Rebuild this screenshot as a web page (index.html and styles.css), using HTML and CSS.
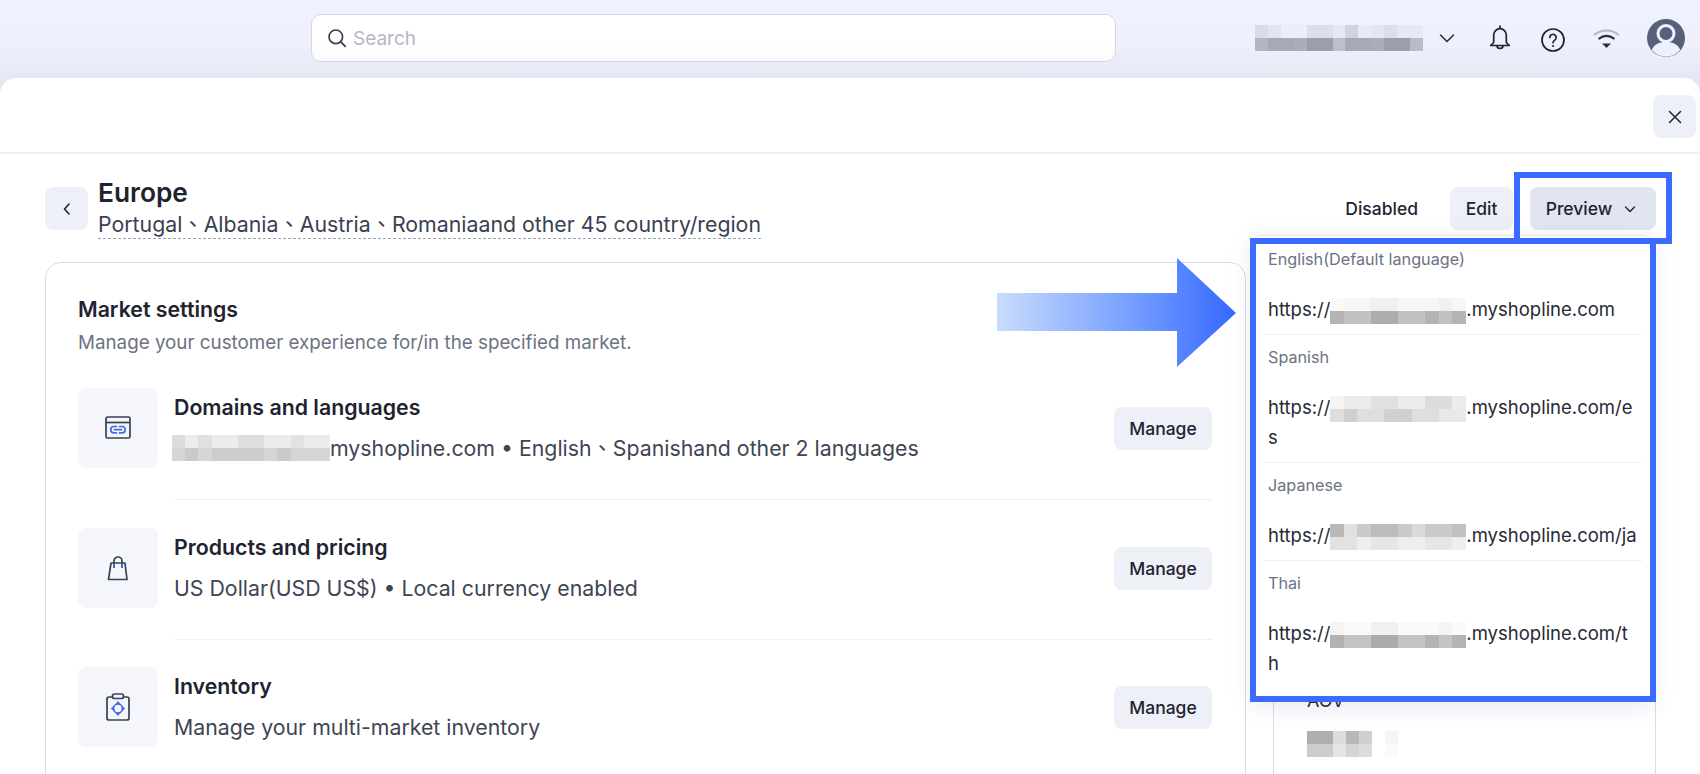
FILE: index.html
```html
<!DOCTYPE html>
<html lang="en">
<head>
<meta charset="utf-8">
<title>Europe market</title>
<link rel="stylesheet" href="styles.css">
</head>
<body>
<div class="app">
  <header class="topbar">
    <div class="search">
      <svg class="search-icon" viewBox="0 0 20 20" width="20" height="20"><circle cx="8.800" cy="8.800" r="6.800" fill="none" stroke="#3b3f4e" stroke-width="1.700"/><path d="M13.800 13.800l4.400 4.600" stroke="#3b3f4e" stroke-width="1.800" stroke-linecap="round"/></svg>
      <span class="search-text">Search</span>
    </div>
    <div class="tools">
      <div class="account">
        <svg class="pix" width="168" height="26" viewBox="0 0 13 2" preserveAspectRatio="none" shape-rendering="crispEdges">
          <rect x="0" y="0" width="1" height="1" fill="#d8dbe8"/><rect x="1" y="0" width="1" height="1" fill="#e2e5f1"/><rect x="2" y="0" width="2" height="1" fill="#ebeef8"/><rect x="4" y="0" width="2" height="1" fill="#dcdfea"/><rect x="6" y="0" width="1" height="1" fill="#e6e9f4"/><rect x="7" y="0" width="1" height="1" fill="#d0d2df"/><rect x="8" y="0" width="1" height="1" fill="#e8ebf6"/><rect x="9" y="0" width="1" height="1" fill="#e4e7f2"/><rect x="10" y="0" width="1" height="1" fill="#dcdfea"/><rect x="11" y="0" width="2" height="1" fill="#e6e9f4"/>
          <rect x="0" y="1" width="1" height="1" fill="#b3b5c4"/><rect x="1" y="1" width="2" height="1" fill="#a6a9b9"/><rect x="3" y="1" width="1" height="1" fill="#aaadbc"/><rect x="4" y="1" width="2" height="1" fill="#9c9eae"/><rect x="6" y="1" width="1" height="1" fill="#bcbfcd"/><rect x="7" y="1" width="2" height="1" fill="#a6a9b9"/><rect x="9" y="1" width="1" height="1" fill="#aaadbc"/><rect x="10" y="1" width="2" height="1" fill="#9c9eae"/><rect x="12" y="1" width="1" height="1" fill="#b8bbc9"/>
        </svg>
        <svg class="icon" viewBox="0 0 24 24" width="24" height="24"><path d="M5.500 9l6.500 6.500L18.500 9" fill="none" stroke="#2b2f3b" stroke-width="1.600" stroke-linecap="round" stroke-linejoin="round"/></svg>
      </div>
      <svg class="icon" viewBox="0 0 24 26" width="24" height="26"><path d="M12 1v2.500M5.700 17.500V10a6.300 6.300 0 0 1 12.600 0v7.500l3 3H2.700z" fill="none" stroke="#1f2330" stroke-width="1.700" stroke-linejoin="round" stroke-linecap="round"/><path d="M9 20.500a3 3 0 0 0 6 0" fill="none" stroke="#1f2330" stroke-width="1.700"/></svg>
      <svg class="icon help" viewBox="0 0 24 24" width="24" height="24"><circle cx="12" cy="12" r="11" fill="none" stroke="#1f2330" stroke-width="1.700"/><path d="M8.800 9.500a3.200 3.200 0 1 1 4.900 2.700c-1.100.7-1.700 1.300-1.700 2.500" fill="none" stroke="#1f2330" stroke-width="1.700" stroke-linecap="round"/><circle cx="12" cy="18" r="1.100" fill="#1f2330"/></svg>
      <svg class="icon wifi" viewBox="0 0 27 20" width="27" height="20"><path d="M1 7c7.500-6 17.500-6 25 0" fill="none" stroke="#b4b7c3" stroke-width="2.200"/><path d="M5.500 11c5-4 11-4 16 0" fill="none" stroke="#2b2f3b" stroke-width="2.200"/><path d="M9 15.500h9l-4.500 4.500z" fill="#2b2f3b"/></svg>
      <svg class="avatar" viewBox="0 0 38 38" width="38" height="38"><circle cx="19" cy="19" r="19" fill="#566079"/><circle cx="19" cy="14.500" r="8" fill="#566079" stroke="#eef1fd" stroke-width="3"/><path d="M4.800 31c2-5.500 7.200-8 14.200-8s12.200 2.500 14.200 8A18.500 18.500 0 0 1 4.800 31z" fill="#eef1fd"/></svg>
    </div>
  </header>

  <div class="panel">
    <div class="panel-bar">
      <button class="btn btn-square" type="button"><svg viewBox="0 0 14 14" width="14" height="14"><path d="M1.500 1.500l11 11M12.500 1.500l-11 11" stroke="#1f2330" stroke-width="1.500" stroke-linecap="round"/></svg></button>
    </div>
    <main class="content">
      <div class="page-head">
        <button class="btn btn-back" type="button"><svg viewBox="0 0 14 14" width="14" height="14"><path d="M9 2L4.500 7 9 12" fill="none" stroke="#1f2330" stroke-width="1.600" stroke-linecap="round" stroke-linejoin="round"/></svg></button>
        <div class="head-text">
          <h1 class="page-title">Europe</h1>
          <div class="page-sub">Portugal、Albania、Austria、Romaniaand other 45 country/region</div>
        </div>
        <div class="actions">
          <span class="status">Disabled</span>
          <button class="btn btn-text" type="button">Edit</button>
          <div class="preview-wrap">
            <button class="btn btn-preview" type="button">Preview<svg viewBox="0 0 12 12" width="12" height="12"><path d="M1.500 4L6 8.500 10.500 4" fill="none" stroke="#1f2330" stroke-width="1.400" stroke-linecap="round" stroke-linejoin="round"/></svg></button>
            <div class="dropdown">
              <div class="lang lang-first">
                <div class="lang-label">English(Default language)</div>
                <div class="lang-url">https://<svg class="pix" width="136" height="26" viewBox="0 0 10 2" preserveAspectRatio="none" shape-rendering="crispEdges"><rect width="10" height="1" fill="#f6f6f6"/><rect x="0" width="1" height="1" fill="#fafafa"/><rect x="3" width="2" height="1" fill="#f0f0f0"/><rect x="8" width="1" height="1" fill="#f0f0f0"/><rect y="1" width="10" height="1" fill="#c2c2c2"/><rect x="0" y="1" width="1" height="1" fill="#b4b4b4"/><rect x="3" y="1" width="2" height="1" fill="#adadad"/><rect x="7" y="1" width="1" height="1" fill="#b4b4b4"/><rect x="9" y="1" width="1" height="1" fill="#b4b4b4"/></svg>.myshopline.com</div>
              </div>
              <div class="lang">
                <div class="lang-label">Spanish</div>
                <div class="lang-url">https://<svg class="pix" width="136" height="26" viewBox="0 0 10 2" preserveAspectRatio="none" shape-rendering="crispEdges"><rect width="10" height="1" fill="#ececec"/><rect x="0" width="1" height="1" fill="#f4f4f4"/><rect x="3" width="2" height="1" fill="#e0e0e0"/><rect x="7" width="2" height="1" fill="#dcdcdc"/><rect y="1" width="10" height="1" fill="#dedede"/><rect x="1" y="1" width="1" height="1" fill="#cfcfcf"/><rect x="4" y="1" width="2" height="1" fill="#d0d0d0"/><rect x="8" y="1" width="2" height="1" fill="#e8e8e8"/></svg>.myshopline.com/e<br>s</div>
              </div>
              <div class="lang">
                <div class="lang-label">Japanese</div>
                <div class="lang-url">https://<svg class="pix" width="136" height="26" viewBox="0 0 10 2" preserveAspectRatio="none" shape-rendering="crispEdges"><rect width="10" height="1" fill="#cacaca"/><rect x="0" width="1" height="1" fill="#b8b8b8"/><rect x="1" width="1" height="1" fill="#e0e0e0"/><rect x="3" width="2" height="1" fill="#bcbcbc"/><rect x="6" width="1" height="1" fill="#dadada"/><rect x="9" width="1" height="1" fill="#c0c0c0"/><rect y="1" width="10" height="1" fill="#eeeeee"/><rect x="0" y="1" width="2" height="1" fill="#e2e2e2"/><rect x="3" y="1" width="2" height="1" fill="#e6e6e6"/><rect x="7" y="1" width="2" height="1" fill="#e6e6e6"/></svg>.myshopline.com/ja</div>
              </div>
              <div class="lang">
                <div class="lang-label">Thai</div>
                <div class="lang-url">https://<svg class="pix" width="136" height="26" viewBox="0 0 10 2" preserveAspectRatio="none" shape-rendering="crispEdges"><rect width="10" height="1" fill="#fafafa"/><rect x="0" width="1" height="1" fill="#f4f4f4"/><rect x="3" width="2" height="1" fill="#f0f0f0"/><rect x="8" width="1" height="1" fill="#f4f4f4"/><rect y="1" width="10" height="1" fill="#c4c4c4"/><rect x="0" y="1" width="1" height="1" fill="#b2b2b2"/><rect x="3" y="1" width="2" height="1" fill="#ababab"/><rect x="7" y="1" width="1" height="1" fill="#b4b4b4"/><rect x="9" y="1" width="1" height="1" fill="#b4b4b4"/></svg>.myshopline.com/t<br>h</div>
              </div>
            </div>
          </div>
        </div>
      </div>

      <div class="columns">
        <section class="card settings">
          <h2 class="card-title">Market settings</h2>
          <p class="card-sub">Manage your customer experience for/in the specified market.</p>
          <div class="rows">
            <div class="row">
              <div class="row-icon"><svg viewBox="0 0 26 24" width="26" height="24"><rect x="1" y="1" width="24" height="21" rx="1.500" fill="none" stroke="#3a4152" stroke-width="1.700"/><path d="M1 6.500h24" stroke="#3a4152" stroke-width="1.700"/><path d="M11.500 10.500H9a3.200 3.200 0 0 0 0 6.400h2.500M14.500 10.500H17a3.200 3.200 0 0 1 0 6.400h-2.500M9.500 13.700h7" fill="none" stroke="#3f6fe0" stroke-width="1.700" stroke-linecap="round"/></svg></div>
              <div class="row-body">
                <div class="row-text">
                  <h3 class="row-title">Domains and languages</h3>
                  <p class="row-sub"><svg class="pix pix-domain" width="158" height="26" viewBox="0 0 12 2" preserveAspectRatio="none" shape-rendering="crispEdges"><rect width="12" height="1" fill="#ececec"/><rect x="0" width="1" height="1" fill="#dcdcdc"/><rect x="2" width="1" height="1" fill="#e0e0e0"/><rect x="5" width="2" height="1" fill="#dedede"/><rect x="9" width="1" height="1" fill="#e2e2e2"/><rect y="1" width="12" height="1" fill="#d6d6d6"/><rect x="1" y="1" width="1" height="1" fill="#cacaca"/><rect x="3" y="1" width="4" height="1" fill="#cdcdcd"/><rect x="8" y="1" width="1" height="1" fill="#cacaca"/></svg>myshopline.com • English、Spanishand other 2 languages</p>
                </div>
                <button class="btn btn-manage" type="button">Manage</button>
              </div>
            </div>
            <div class="row">
              <div class="row-icon"><svg viewBox="0 0 24 26" width="24" height="26"><path d="M5 8h14l2 16.500H2.500z" fill="none" stroke="#3a4152" stroke-width="1.700" stroke-linejoin="round"/><path d="M8 13V6a4 4 0 0 1 8 0v7" fill="none" stroke="#3a4152" stroke-width="1.700"/><path d="M8 8.500V13M16 8.500V13" stroke="#3f6fe0" stroke-width="1.700"/></svg></div>
              <div class="row-body">
                <div class="row-text">
                  <h3 class="row-title">Products and pricing</h3>
                  <p class="row-sub">US Dollar(USD US$) • Local currency enabled</p>
                </div>
                <button class="btn btn-manage" type="button">Manage</button>
              </div>
            </div>
            <div class="row">
              <div class="row-icon"><svg viewBox="0 0 24 28" width="24" height="28"><rect x="1" y="4" width="22" height="23" rx="2" fill="none" stroke="#3a4152" stroke-width="1.700"/><rect x="6.500" y="1" width="11" height="4.500" rx="2" fill="#f4f6fb" stroke="#3a4152" stroke-width="1.700"/><circle cx="12" cy="15.500" r="4.500" fill="none" stroke="#3f6fe0" stroke-width="1.600"/><path d="M12 8l-3 3.500h6zM12 23l-3-3.500h6zM4.800 15.500l3.400-3v6zM19.200 15.500l-3.400-3v6z" fill="#3f6fe0"/></svg></div>
              <div class="row-body row-body-last">
                <div class="row-text">
                  <h3 class="row-title">Inventory</h3>
                  <p class="row-sub">Manage your multi-market inventory</p>
                </div>
                <button class="btn btn-manage" type="button">Manage</button>
              </div>
            </div>
          </div>
        </section>
        <aside class="card stats">
          <div class="stat-label">AOV</div>
          <svg class="pix" width="104" height="26" viewBox="0 0 8 2" preserveAspectRatio="none" shape-rendering="crispEdges"><rect x="0" width="2" height="1" fill="#afafaf"/><rect x="2" width="1" height="1" fill="#dcdcdc"/><rect x="3" width="1" height="1" fill="#b8b8b8"/><rect x="4" width="1" height="1" fill="#cfcfcf"/><rect x="6" width="1" height="1" fill="#f5f5f5"/><rect x="0" y="1" width="2" height="1" fill="#cccccc"/><rect x="2" y="1" width="1" height="1" fill="#e4e4e4"/><rect x="3" y="1" width="1" height="1" fill="#d4d4d4"/><rect x="4" y="1" width="1" height="1" fill="#dcdcdc"/><rect x="6" y="1" width="1" height="1" fill="#fafafa"/></svg>
        </aside>
      </div>
    </main>
  </div>

  <svg class="arrow" width="240" height="110" viewBox="0 0 240 110">
    <defs><linearGradient id="arrowFill" x1="0" y1="0" x2="1" y2="0"><stop offset="0" stop-color="#c9dcfd"/><stop offset="0.5" stop-color="#7fa6ff"/><stop offset="1" stop-color="#3568ff"/></linearGradient></defs>
    <path d="M0 35H180V0L239 55 180 109V73H0z" fill="url(#arrowFill)"/>
  </svg>
  <div class="callout callout-preview"></div>
  <div class="callout callout-menu"></div>
</div>
</body>
</html>
```

FILE: styles.css
```css
* { box-sizing: border-box; }
html, body { margin: 0; height: 100%; overflow: hidden; }
body { font-family: "Inter", "Noto Sans CJK TC", "Liberation Sans", sans-serif; color: #1f2330; background: #fff; }
h1, h2, h3, p { margin: 0; }

.app { position: relative; width: 1700px; height: 774px; overflow: hidden; background: linear-gradient(#eff2fe 0, #eef1fc 45px, #e5e8f4 78px, #e5e8f4 100%); }

.topbar { height: 78px; display: flex; padding: 14px 15px 0 311px; align-items: flex-start; }
.search { width: 805px; height: 48px; display: flex; align-items: center; gap: 6px; padding-left: 15px; background: linear-gradient(#fff 60%, #fbfbfd); border: 1px solid #d5d7e6; border-radius: 10px; }
.search-text { font-size: 19px; color: #b4b7c6; }
.tools { margin-left: auto; display: flex; align-items: center; gap: 29px; height: 48px; }
.account { display: flex; align-items: center; gap: 12px; }
.icon, .avatar, .pix { display: block; flex: none; }
.help { margin-top: 4px; }
.wifi { margin: 0 -2px 0 -1px; }

.panel { background: #fff; border-radius: 16px 16px 0 0; height: 696px; }
.panel-bar { height: 76px; display: flex; justify-content: flex-end; align-items: flex-start; padding: 17px 4px 0 0; border-bottom: 2px solid #eff0f4; }

.btn { display: inline-flex; align-items: center; justify-content: center; height: 43px; border: 0; border-radius: 8px; background: #eef0f7; font: 500 17.500px "Inter", "Liberation Sans", sans-serif; color: #1f2330; padding: 0; }
.btn-square { width: 43px; }
.btn-back { width: 43px; flex: none; margin-top: 11px; }
.btn-text { width: 63px; }
.btn-preview { width: 126px; gap: 12px; padding-right: 4px; background: #e1e5f2; }
.btn-manage { width: 98px; flex: none; margin-top: 19px; }

.content { padding: 22px 44px 0 45px; }
.page-head { display: flex; height: 86px; align-items: flex-start; }
.head-text { margin-left: 10px; }
.page-title { font-size: 26.300px; line-height: 34px; font-weight: 600; color: #1f2330; }
.page-sub { font-size: 21.300px; line-height: 28px; color: #3a4152; border-bottom: 1px dashed #9da1ad; }
.actions { margin-left: auto; margin-top: 11px; display: flex; align-items: center; gap: 17px; }
.status { font-size: 17.500px; font-weight: 500; margin-right: 15px; }
.preview-wrap { position: relative; }

.dropdown { position: absolute; top: 48px; right: 4px; width: 400px; height: 465px; background: #fff; border: 1px solid #e3e5ee; border-radius: 8px; box-shadow: 0 6px 24px rgba(70, 90, 160, .14); z-index: 2; }
.lang { margin: 0 9px 0 10px; padding: 10px 5px 10px; border-top: 1px solid #eceef2; }
.lang-first { border-top: 0; padding-top: 11px; }
.lang-label { font-size: 16.200px; line-height: 24px; color: #6c7285; }
.lang-url { margin-top: 23px; font-size: 18.500px; line-height: 30px; color: #262a36; white-space: nowrap; }
.lang-url .pix { display: inline-block; vertical-align: middle; }

.columns { display: flex; gap: 27px; }
.card { border: 1px solid #d9dbe4; border-radius: 16px; background: #fff; height: 600px; flex: none; }
.settings { width: 1201px; padding: 32px 33px 0 32px; }
.stats { width: 383px; padding: 424px 0 0 33px; }
.stat-label { font-size: 18px; line-height: 28px; margin-bottom: 16px; }

.card-title { font-size: 21.300px; line-height: 28px; font-weight: 600; color: #1f2330; }
.card-sub { margin-top: 6px; font-size: 18.800px; line-height: 28px; color: #6c7285; }
.rows { margin-top: 31px; }
.row { display: flex; gap: 16px; margin-bottom: 27.500px; }
.row-icon { width: 80px; height: 80px; flex: none; display: flex; align-items: center; justify-content: center; background: #f4f6fb; border-radius: 8px; }
.row-body { flex: 1; display: flex; justify-content: space-between; align-items: flex-start; height: 112px; border-bottom: 1px solid #eff0f4; }
.row-body-last { border-bottom: 0; }
.row-title { margin-top: 5px; font-size: 21.300px; line-height: 28px; font-weight: 600; color: #1f2330; }
.row-sub { margin-top: 12px; display: flex; align-items: center; font-size: 21.300px; line-height: 30px; color: #3f4554; }
.pix-domain { margin-left: -2px; }

.arrow { position: absolute; left: 997px; top: 258px; z-index: 3; filter: blur(.7px); }
.callout { position: absolute; border: 6px solid #3b6bff; z-index: 4; pointer-events: none; }
.callout-preview { left: 1514px; top: 172px; width: 158px; height: 72px; }
.callout-menu { left: 1250px; top: 238px; width: 406px; height: 464px; }
```
